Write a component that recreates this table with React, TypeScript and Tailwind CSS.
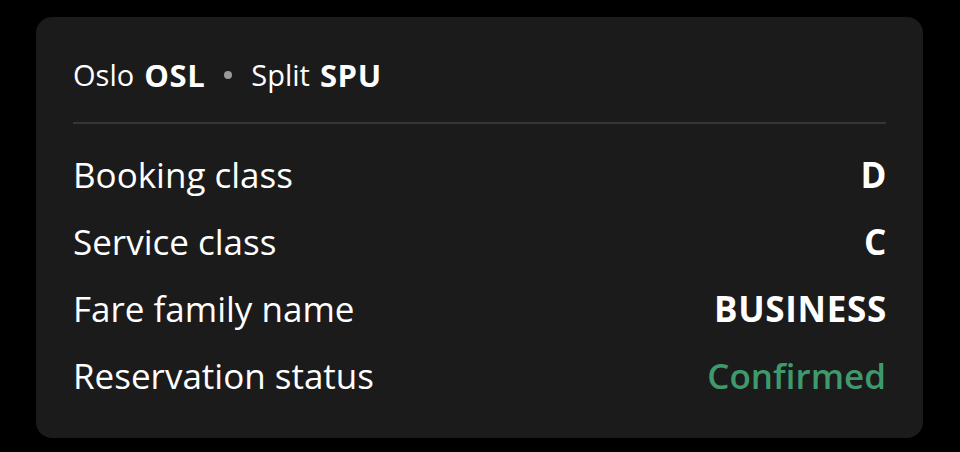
import React from 'react';

const rows = [
  { label: 'Booking class', value: 'D' },
  { label: 'Service class', value: 'C' },
  { label: 'Fare family name', value: 'BUSINESS' },
  { label: 'Reservation status', value: 'Confirmed', accent: true },
];

const App: React.FC = () => {
  return (
    <div
      className="w-[960px] h-[452px] bg-black pt-[17px] px-[36px] pb-[14px]"
      style={{ fontFamily: '"Open Sans", "Noto Sans", sans-serif' }}
    >
      <div className="h-[421px] w-[887px] rounded-[16px] bg-[#1b1b1b] px-[37px] pt-[40px] text-white">
        {/* Route */}
        <div className="flex items-center text-[29px] leading-[36px] h-[36px]">
          <span>Oslo</span>
          <span className="ml-[10px] text-[31px] font-bold tracking-[0.02em]">OSL</span>
          <span className="ml-[19px] mr-[19px] h-[8px] w-[8px] rounded-full bg-[#9a9a9a]" />
          <span>Split</span>
          <span className="ml-[10px] text-[31px] font-bold tracking-[0.02em]">SPU</span>
        </div>

        <div className="mt-[29px] h-[2px] bg-[#363636]" />

        {/* Details */}
        <div className="mt-[18px] flex flex-col">
          {rows.map((row) => (
            <div key={row.label} className="flex h-[67px] items-center justify-between text-[35px]">
              <span>{row.label}</span>
              <span
                className={
                  row.accent ? 'font-semibold text-[#3e9a6d]' : 'font-bold text-white tracking-[0.02em] -mr-[1px]'
                }
              >
                {row.value}
              </span>
            </div>
          ))}
        </div>
      </div>
    </div>
  );
};

export default App;
